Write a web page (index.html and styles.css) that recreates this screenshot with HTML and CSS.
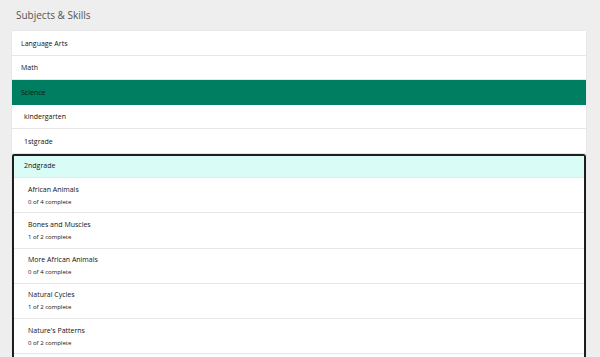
FILE: index.html
```html
<!DOCTYPE html>
<html>
<head>
<meta charset="utf-8">
<link rel="stylesheet" href="styles.css">
</head>
<body>
<div class="page">
  <h1 class="title">Subjects &amp; Skills</h1>
  <div class="panel">
    <div class="row">Language Arts</div>
    <div class="row">Math</div>
    <div class="row row-active">Science</div>
    <div class="row row-grade">kindergarten</div>
    <div class="row row-grade">1stgrade</div>
    <div class="group">
      <div class="group-head">2ndgrade</div>
      <div class="skill">
        <div class="skill-name">African Animals</div>
        <div class="skill-meta">0 of 4 complete</div>
      </div>
      <div class="skill">
        <div class="skill-name">Bones and Muscles</div>
        <div class="skill-meta">1 of 2 complete</div>
      </div>
      <div class="skill">
        <div class="skill-name">More African Animals</div>
        <div class="skill-meta">0 of 4 complete</div>
      </div>
      <div class="skill">
        <div class="skill-name">Natural Cycles</div>
        <div class="skill-meta">1 of 2 complete</div>
      </div>
      <div class="skill">
        <div class="skill-name">Nature's Patterns</div>
        <div class="skill-meta">0 of 2 complete</div>
      </div>
      <div class="skill skill-more"></div>
    </div>
  </div>
</div>
</body>
</html>
```
FILE: styles.css
```css
html, body {
  margin: 0;
  padding: 0;
  background: #eeeeee;
  font-family: "Open Sans", "Noto Sans", sans-serif;
  color: #111;
}
.page {
  padding: 0 14px 0 12px;
}
.title {
  margin: 0;
  padding: 8px 0 0 4px;
  height: 23px;
  font-size: 10px;
  font-weight: 400;
  color: #555;
  line-height: 14px;
}
.panel {
  background: #fff;
  box-shadow: 0 0 1px rgba(0,0,0,0.15);
}
.row {
  font-size: 7px;
  line-height: 11px;
  padding: 6.5px 9px 6px;
  border-bottom: 1px solid #e6e6e6;
}
.row-active {
  background: #007e62;
  border-bottom-color: #007e62;
}
.row-grade {
  padding-left: 12px;
}
.group {
  border: 2px solid #1e1e1e;
  border-radius: 2px 3px 0 0;
}
.group-head {
  background: #d9fcf6;
  font-size: 7px;
  line-height: 11px;
  padding: 4.5px 10px 6px;
  border-bottom: 1px solid #e6e6e6;
}
.skill {
  padding: 5.5px 14px 4.75px;
  border-bottom: 1px solid #e6e6e6;
}
.skill-more {
  height: 24px;
}
.skill-name {
  font-size: 7px;
  line-height: 11px;
}
.skill-meta {
  font-size: 6px;
  line-height: 11px;
  margin-top: 2px;
}
```
